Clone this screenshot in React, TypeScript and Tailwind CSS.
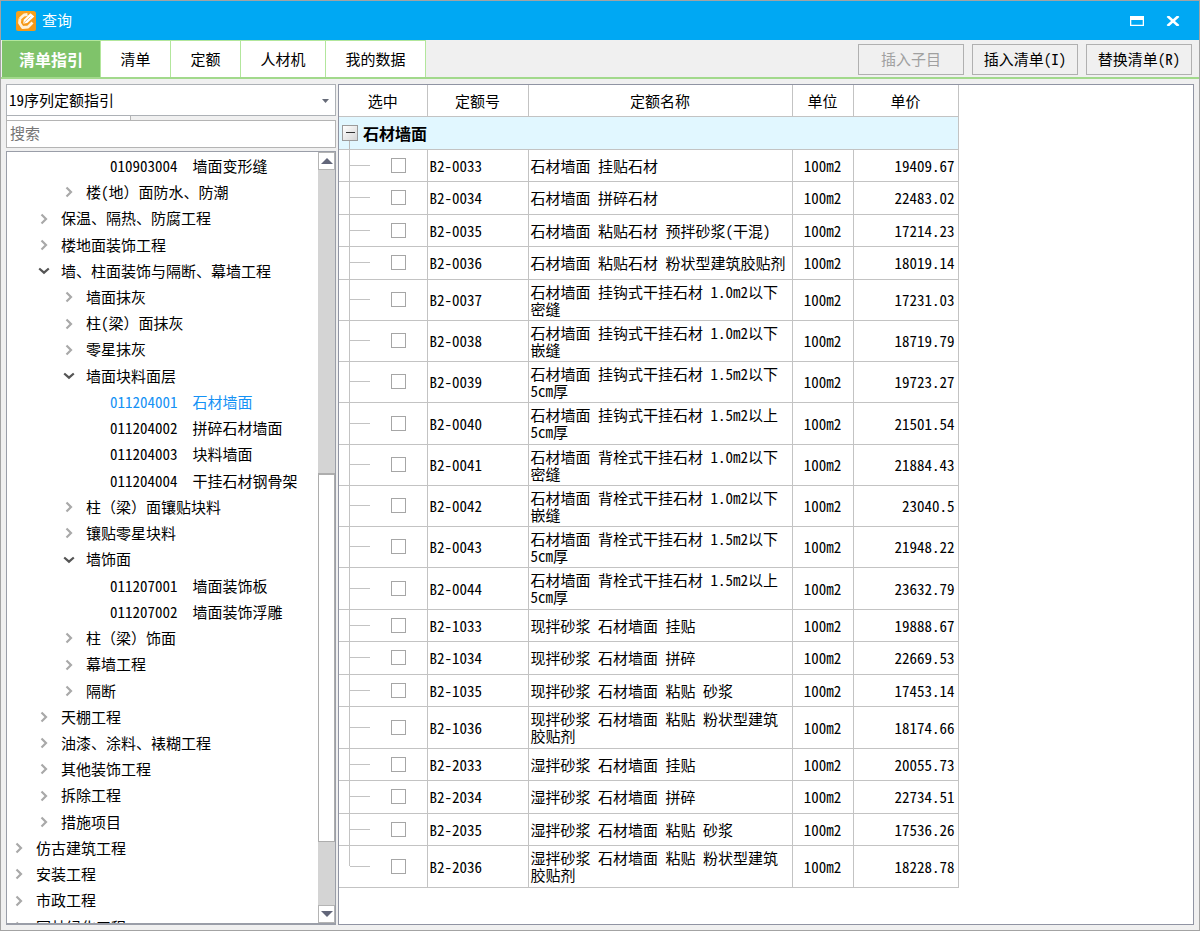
import { useState } from "react";
import clsx from "clsx";

interface TreeItem {
    name: string;
    level: number;
    open?: boolean;
    code?: string;
}

interface QuotaRow {
    code: string;
    name: string;
    price: string;
    tall?: boolean;
}

const TABS = [
    { label: "清单指引", width: "w-[99px]" },
    { label: "清单", width: "w-[70px]" },
    { label: "定额", width: "w-[70px]" },
    { label: "人材机", width: "w-[85px]" },
    { label: "我的数据", width: "w-[100px]" },
];

const TREE: TreeItem[] = [
    { level: 3, code: "010903004", name: "墙面变形缝" },
    { level: 2, name: "楼(地）面防水、防潮" },
    { level: 1, name: "保温、隔热、防腐工程" },
    { level: 1, name: "楼地面装饰工程" },
    { level: 1, name: "墙、柱面装饰与隔断、幕墙工程", open: true },
    { level: 2, name: "墙面抹灰" },
    { level: 2, name: "柱(梁）面抹灰" },
    { level: 2, name: "零星抹灰" },
    { level: 2, name: "墙面块料面层", open: true },
    { level: 3, code: "011204001", name: "石材墙面" },
    { level: 3, code: "011204002", name: "拼碎石材墙面" },
    { level: 3, code: "011204003", name: "块料墙面" },
    { level: 3, code: "011204004", name: "干挂石材钢骨架" },
    { level: 2, name: "柱（梁）面镶贴块料" },
    { level: 2, name: "镶贴零星块料" },
    { level: 2, name: "墙饰面", open: true },
    { level: 3, code: "011207001", name: "墙面装饰板" },
    { level: 3, code: "011207002", name: "墙面装饰浮雕" },
    { level: 2, name: "柱（梁）饰面" },
    { level: 2, name: "幕墙工程" },
    { level: 2, name: "隔断" },
    { level: 1, name: "天棚工程" },
    { level: 1, name: "油漆、涂料、裱糊工程" },
    { level: 1, name: "其他装饰工程" },
    { level: 1, name: "拆除工程" },
    { level: 1, name: "措施项目" },
    { level: 0, name: "仿古建筑工程" },
    { level: 0, name: "安装工程" },
    { level: 0, name: "市政工程" },
    { level: 0, name: "园林绿化工程" },
];

const ROWS: QuotaRow[] = [
    { code: "B2-0033", name: "石材墙面 挂贴石材", price: "19409.67" },
    { code: "B2-0034", name: "石材墙面 拼碎石材", price: "22483.02" },
    { code: "B2-0035", name: "石材墙面 粘贴石材 预拌砂浆(干混)", price: "17214.23" },
    { code: "B2-0036", name: "石材墙面 粘贴石材 粉状型建筑胶贴剂", price: "18019.14" },
    { code: "B2-0037", name: "石材墙面 挂钩式干挂石材 1.0m2以下\n密缝", price: "17231.03", tall: true },
    { code: "B2-0038", name: "石材墙面 挂钩式干挂石材 1.0m2以下\n嵌缝", price: "18719.79", tall: true },
    { code: "B2-0039", name: "石材墙面 挂钩式干挂石材 1.5m2以下\n5cm厚", price: "19723.27", tall: true },
    { code: "B2-0040", name: "石材墙面 挂钩式干挂石材 1.5m2以上\n5cm厚", price: "21501.54", tall: true },
    { code: "B2-0041", name: "石材墙面 背栓式干挂石材 1.0m2以下\n密缝", price: "21884.43", tall: true },
    { code: "B2-0042", name: "石材墙面 背栓式干挂石材 1.0m2以下\n嵌缝", price: "23040.5", tall: true },
    { code: "B2-0043", name: "石材墙面 背栓式干挂石材 1.5m2以下\n5cm厚", price: "21948.22", tall: true },
    { code: "B2-0044", name: "石材墙面 背栓式干挂石材 1.5m2以上\n5cm厚", price: "23632.79", tall: true },
    { code: "B2-1033", name: "现拌砂浆 石材墙面 挂贴", price: "19888.67" },
    { code: "B2-1034", name: "现拌砂浆 石材墙面 拼碎", price: "22669.53" },
    { code: "B2-1035", name: "现拌砂浆 石材墙面 粘贴 砂浆", price: "17453.14" },
    { code: "B2-1036", name: "现拌砂浆 石材墙面 粘贴 粉状型建筑\n胶贴剂", price: "18174.66", tall: true },
    { code: "B2-2033", name: "湿拌砂浆 石材墙面 挂贴", price: "20055.73" },
    { code: "B2-2034", name: "湿拌砂浆 石材墙面 拼碎", price: "22734.51" },
    { code: "B2-2035", name: "湿拌砂浆 石材墙面 粘贴 砂浆", price: "17536.26" },
    { code: "B2-2036", name: "湿拌砂浆 石材墙面 粘贴 粉状型建筑\n胶贴剂", price: "18228.78", tall: true },
];

const INDENT = ["pl-0", "pl-[25px]", "pl-[50px]", "pl-[103px]"];

function TitleBar() {
    return (
        <header className="flex h-[39px] shrink-0 items-center bg-[#00a8f3] pr-[19px] pl-[15px] text-white">
            <svg className="size-5" viewBox="0 0 20 20" fill="none">
                <rect width="20" height="20" rx="2.5" fill="#f9a11b" />
                <path d="M0 13 L20 4 V17.5 Q20 20 17.500 20 H2.500 Q0 20 0 17.500Z" fill="#f18d12" opacity=".4" />
                <path d="M4 7.500 L8 4 L11.500 3.500 M4 7.500 L3.500 12 L6.500 16.500 L12 16 L16.500 11.500" stroke="#fff1d8" strokeWidth="2.800" strokeLinejoin="round" />
                <path d="M7 12.700 L7.800 8.800 L14.500 2.200 L18.300 5.400 L11.300 12Z" fill="#fff" />
                <path d="M7 12.700 L14.500 5.500" stroke="#f6b04a" strokeWidth=".8" />
            </svg>
            <h1 className="ml-[6px] flex-1 text-[15px]">查询</h1>
            <button aria-label="最大化" className="mr-[22px]">
                <svg width="14" height="10" viewBox="0 0 14 10">
                    <path d="M0 0H14V10H0Z M1.300 4V8.700H12.700V4Z" fill="#fff" fillRule="evenodd" />
                </svg>
            </button>
            <button aria-label="关闭">
                <svg width="14" height="10" viewBox="0 0 14 10">
                    <path d="M1.500 0 L12.500 10 M12.500 0 L1.500 10" stroke="#fff" strokeWidth="2.600" />
                </svg>
            </button>
        </header>
    );
}

function Chevron({ open }: { open?: boolean }) {
    return (
        <span className="flex w-6 shrink-0 justify-center">
            {open ? (
                <svg width="12" height="8" viewBox="0 0 12 8" fill="none">
                    <path d="M1.200 1.500 L6 5.700 L10.800 1.500" stroke="#555" strokeWidth="2.200" />
                </svg>
            ) : (
                <svg width="8" height="12" viewBox="0 0 8 12" fill="none">
                    <path d="M1.500 1.500 L6 6 L1.500 10.500" stroke="#a9a9a9" strokeWidth="2.200" />
                </svg>
            )}
        </span>
    );
}

// The half-width feature also narrows （）, so those are set without it
function TreeLabel({ text }: { text: string }) {
    return (
        <span>
            {text.split(/([（）])/).map((part, i) =>
                i % 2 === 1 ? (
                    <span key={i} className="[font-feature-settings:normal]">{part}</span>
                ) : (
                    part
                )
            )}
        </span>
    );
}

function ScrollBar() {
    return (
        <div className="flex w-[17px] shrink-0 flex-col bg-[#d4d4d4]">
            <button aria-label="向上滚动" className="flex h-[18px] items-center justify-center border border-[#b4b4b4] bg-white">
                <svg width="12" height="6" viewBox="0 0 12 6"><path d="M0 6L6 0L12 6Z" fill="#62667a" /></svg>
            </button>
            <div className="grow-[304]" />
            <div className="grow-[368] border border-t-2 border-[#adadad] bg-white" />
            <div className="grow-[63]" />
            <button aria-label="向下滚动" className="flex h-[18px] items-center justify-center border border-[#b4b4b4] bg-white">
                <svg width="12" height="6" viewBox="0 0 12 6"><path d="M0 0H12L6 6Z" fill="#62667a" /></svg>
            </button>
        </div>
    );
}

function Sidebar() {
    const [selected, setSelected] = useState("011204001");

    return (
        <aside className="flex w-[330px] shrink-0 flex-col">
            <div className="relative shrink-0">
                <select aria-label="定额指引" className="block h-8 w-full appearance-none border border-[#adb1b6] bg-white pl-[2px]">
                    <option>19序列定额指引</option>
                </select>
                <svg className="pointer-events-none absolute top-[15px] right-[7px]" width="7" height="4" viewBox="0 0 7 4">
                    <path d="M0 0H7L3.500 4Z" fill="#666b78" />
                </svg>
            </div>
            <div className="h-1 w-[125px] shrink-0 border-r border-l border-[#b4b4b4] bg-white" />
            <input
                type="text"
                aria-label="搜索"
                placeholder="搜索"
                className="h-7 shrink-0 border border-[#b4b4b4] bg-white px-[3px] pb-[3px] placeholder:text-[#767676]"
            />
            <div className="mt-[3px] flex min-h-0 flex-1 overflow-hidden border border-b-2 border-[#9a9ea8] bg-white">
                <div className="min-w-0 flex-1 overflow-hidden">
                    <ul className="grid h-[788px] auto-rows-fr pt-px">
                        {TREE.map((item) => (
                            <li key={item.name + item.level} className="flex min-h-0">
                                <button
                                    onClick={() => item.code && setSelected(item.code)}
                                    className={clsx(
                                        "flex flex-1 items-center gap-[5px] whitespace-pre",
                                        INDENT[item.level],
                                        item.code === selected && "text-[#1592f5]"
                                    )}
                                >
                                    {!item.code && <Chevron open={item.open} />}
                                    <TreeLabel text={item.code ? `${item.code}  ${item.name}` : item.name} />
                                </button>
                            </li>
                        ))}
                    </ul>
                </div>
                <ScrollBar />
            </div>
        </aside>
    );
}

function QuotaTable() {
    return (
        <table className="w-[619px] table-fixed border-collapse leading-[17px]">
            <colgroup>
                <col className="w-[10px]" />
                <col className="w-[78px]" />
                <col className="w-[101px]" />
                <col className="w-[264px]" />
                <col className="w-[61px]" />
                <col className="w-[105px]" />
            </colgroup>
            <thead>
                <tr className="h-[31px] *:border-r *:border-b *:border-[#c3c3c3] *:font-normal">
                    <th colSpan={2}>选中</th>
                    <th>定额号</th>
                    <th>定额名称</th>
                    <th>单位</th>
                    <th>单价</th>
                </tr>
            </thead>
            <tbody>
                <tr className="h-[33px]">
                    <th colSpan={6} className="relative border-r border-b border-[#c3c3c3] bg-[#e1f7ff] p-0 text-left">
                        <span className="absolute bottom-0 left-[10px] h-2 w-px bg-[#b8b8b8]" />
                        <span className="flex items-center gap-[5px] pl-[3px] text-base">
                            <button
                                aria-label="折叠"
                                className="flex size-4 items-center justify-center border border-[#9b9b9b] bg-linear-to-br from-white to-[#d6d6d6]"
                            >
                                <span className="h-px w-[9px] bg-[#333]" />
                            </button>
                            石材墙面
                        </span>
                    </th>
                </tr>
            </tbody>
            <tbody>
                {ROWS.map((row, i) => {
                    const last = i === ROWS.length - 1;
                    return (
                        <tr
                            key={row.code}
                            className={clsx(
                                "*:border-b *:border-b-[#c3c3c3] *:py-0",
                                row.tall ? "h-[41px] nth-[4n]:h-[42px]" : "h-8 even:h-[33px]"
                            )}
                        >
                            <td className={clsx("relative border-r p-0", last ? "border-r-transparent" : "border-r-[#c3c3c3]")}>
                                {last && <span className="absolute top-0 -right-px h-1/2 w-px bg-[#c3c3c3]" />}
                            </td>
                            <td className="border-r border-r-[#c3c3c3] p-0">
                                <span className="flex items-center gap-[21px]">
                                    <span className="h-px w-5 bg-[#c3c3c3]" />
                                    <input
                                        type="checkbox"
                                        aria-label={row.code}
                                        className="size-[15px] appearance-none border border-[#a6a6a6] bg-white checked:bg-[#00a8f3]"
                                    />
                                </span>
                            </td>
                            <td className="border-r border-r-[#c3c3c3] px-[2px]">{row.code}</td>
                            <td className="border-r border-r-[#c3c3c3] px-[2px] whitespace-pre">{row.name}</td>
                            <td className="border-r border-r-[#c3c3c3] text-center">100m2</td>
                            <td className="border-r border-r-[#c3c3c3] pr-[3px] text-right">{row.price}</td>
                        </tr>
                    );
                })}
            </tbody>
        </table>
    );
}

export default function App() {
    const [tab, setTab] = useState("清单指引");
    const buttonStyle = "h-[31px] w-[106px] border border-[#b0b0b0] bg-[#f0f0f0] disabled:text-[#a0a0a0]";

    return (
        <div className="flex h-screen flex-col border border-[#a3a3a3] bg-[#f0f0f0] font-['Noto_Sans_CJK_SC',sans-serif] text-[15px] text-black [font-feature-settings:'hwid']">
            <TitleBar />
            <div className="flex h-[39px] shrink-0 items-center justify-between border-b-2 border-[#a2d98c] pr-[7px] pl-px">
                <nav className="flex h-full">
                    {TABS.map((t) => (
                        <button
                            key={t.label}
                            onClick={() => setTab(t.label)}
                            className={clsx(
                                "border-t border-r border-[#b2e69c]",
                                t.width,
                                t.label === tab ? "bg-[#7fc36a] text-base font-bold text-white" : "bg-white"
                            )}
                        >
                            {t.label}
                        </button>
                    ))}
                </nav>
                <div className="flex gap-2 pt-px">
                    <button disabled className={buttonStyle}>插入子目</button>
                    <button className={buttonStyle}>插入清单(I)</button>
                    <button className={buttonStyle}>替换清单(R)</button>
                </div>
            </div>
            <div className="flex min-h-0 flex-1 gap-[2px] p-[5px]">
                <Sidebar />
                <main className="min-w-0 flex-1 overflow-hidden border border-[#9094a3] bg-white">
                    <QuotaTable />
                </main>
            </div>
        </div>
    );
}
